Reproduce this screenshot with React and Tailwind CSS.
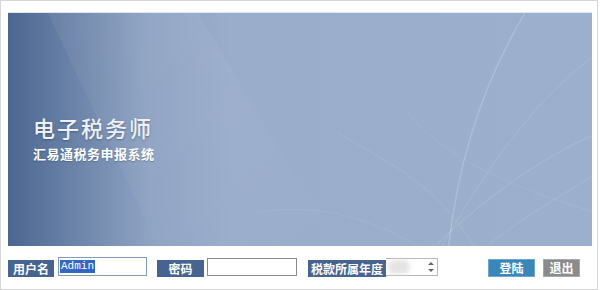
import React from 'react';

const cjk = { fontFamily: '"Noto Sans CJK SC", "Noto Sans", sans-serif' };

function Banner() {
  return (
    <div className="relative ml-[7px] mt-[11px] h-[234px] w-[584px] overflow-hidden border-t border-[#dfe6f0] bg-[linear-gradient(90deg,#4b6690_0%,#6d85aa_12%,#8ea2c2_24%,#9aadcb_38%,#9cafcc_100%)]">
      {/* soft light shapes and curves */}
      <svg className="absolute inset-0" width="584" height="234" viewBox="0 0 584 234">
        <defs>
          <linearGradient id="fade" x1="0" y1="0" x2="1" y2="1">
            <stop offset="0" stopColor="#ffffff" stopOpacity="0.06" />
            <stop offset="1" stopColor="#ffffff" stopOpacity="0" />
          </linearGradient>
        </defs>
        <path d="M40 0 L190 0 L330 234 L150 234 Z" fill="url(#fade)" />
        <path d="M520 -5 C480 60 450 140 440 240" stroke="#ffffff" strokeOpacity="0.22" strokeWidth="1.2" fill="none" />
        <path d="M590 40 C520 90 470 170 430 240" stroke="#ffffff" strokeOpacity="0.12" strokeWidth="1" fill="none" />
        <path d="M590 120 C520 150 460 200 420 240" stroke="#ffffff" strokeOpacity="0.15" strokeWidth="1" fill="none" />
        <path d="M590 160 C540 190 500 215 470 240" stroke="#ffffff" strokeOpacity="0.12" strokeWidth="1" fill="none" />
        <path d="M330 120 C380 150 430 170 470 240" stroke="#ffffff" strokeOpacity="0.10" strokeWidth="1" fill="none" />
        <path d="M420 240 C360 200 300 190 250 200" stroke="#ffffff" strokeOpacity="0.08" strokeWidth="1" fill="none" />
        <path d="M400 100 C440 150 520 180 590 200" stroke="#ffffff" strokeOpacity="0.08" strokeWidth="1" fill="none" />
      </svg>
      <div className="relative pl-[25px] pt-[102px]" style={cjk}>
        <div className="text-[22px] font-medium leading-[24px] tracking-[2px] text-[#eef1f6] [text-shadow:0_1px_2px_rgba(40,60,90,0.5)]">
          电子税务师
        </div>
        <div className="mt-[7px] text-[13px] font-bold leading-[16px] tracking-[0.5px] text-white [text-shadow:0_1px_1px_rgba(40,60,90,0.4)]">
          汇易通税务申报系统
        </div>
      </div>
    </div>
  );
}

function Label({ children, w }) {
  return (
    <div
      className="flex h-[17px] items-center justify-center bg-[#46648f] text-[12px] font-bold leading-none text-white"
      style={{ ...cjk, width: w }}
    >
      {children}
    </div>
  );
}

export default function App() {
  return (
    <div className="h-[290px] w-[600px] bg-white">
      <div className="h-[290px] w-[598px] border border-[#d6d6d6] bg-white">
        <Banner />
        <div className="mt-[11px] flex items-end pl-[7px]">
          <Label w={46}>用户名</Label>
          <div className="mb-[1px] ml-[4px] flex h-[19px] w-[89px] items-center border border-[#7f9db9] bg-white px-[1px]">
            <span className="bg-[#3466c4] px-[1px] font-['Liberation_Mono',monospace] text-[11px] leading-[13px] text-white">
              Admin
            </span>
          </div>
          <div className="ml-[10px]">
            <Label w={47}>密码</Label>
          </div>
          <div className="mb-[1px] ml-[3px] h-[18px] w-[90px] border border-[#8a8a8a] bg-white" />
          <div className="ml-[11px]">
            <Label w={78}>税款所属年度</Label>
          </div>
          <div className="mb-[1px] flex h-[18px] w-[52px] items-center border border-l-0 border-[#b8b8b8] bg-white">
            <div className="ml-[2px] h-[14px] w-[22px] rounded-full bg-[#e4e4e4] blur-[2px]" />
            <div className="ml-auto mr-[1px] flex h-[14px] w-[10px] flex-col">
              <div className="flex flex-1 items-center justify-center">
                <div className="h-0 w-0 border-x-[3px] border-b-[3px] border-x-transparent border-b-[#666]" />
              </div>
              <div className="flex flex-1 items-center justify-center">
                <div className="h-0 w-0 border-x-[3px] border-t-[3px] border-x-transparent border-t-[#666]" />
              </div>
            </div>
          </div>
          <button
            className="ml-[50px] flex h-[18px] w-[47px] items-center justify-center border border-[#6fa6cf] bg-[#3a86b9] text-[12px] font-bold leading-none text-white"
            style={cjk}
          >
            登陆
          </button>
          <button
            className="ml-[8px] flex h-[18px] w-[37px] items-center justify-center border border-[#a9a9a9] bg-[#8b8b8b] text-[12px] font-bold leading-none text-white"
            style={cjk}
          >
            退出
          </button>
        </div>
      </div>
    </div>
  );
}
